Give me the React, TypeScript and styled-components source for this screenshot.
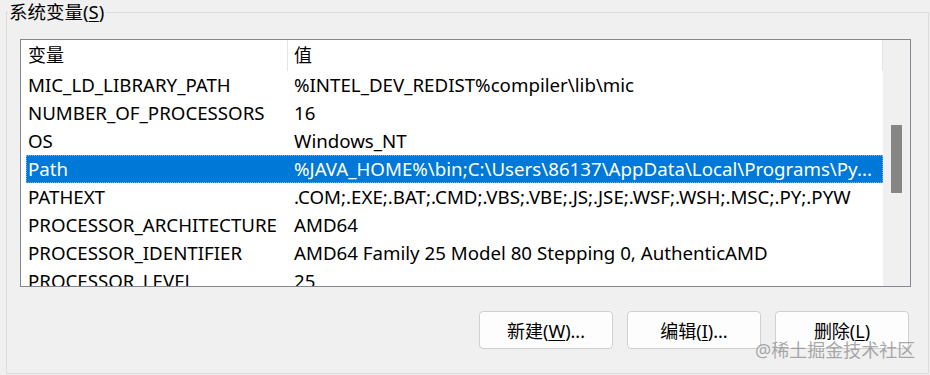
import React from 'react';
import styled, { createGlobalStyle } from 'styled-components';

const GlobalStyle = createGlobalStyle`
  html, body {
    margin: 0;
    padding: 0;
    height: 375px;
    overflow: hidden;
    background: #f0f0f0;
  }
  body {
    font-family: "Noto Sans", "Noto Sans CJK SC", sans-serif;
    color: #000;
  }
`;

type EnvVar = { name: string; value: string; selected?: boolean };

const variables: EnvVar[] = [
  { name: 'MIC_LD_LIBRARY_PATH', value: '%INTEL_DEV_REDIST%compiler\\lib\\mic' },
  { name: 'NUMBER_OF_PROCESSORS', value: '16' },
  { name: 'OS', value: 'Windows_NT' },
  {
    name: 'Path',
    value: '%JAVA_HOME%\\bin;C:\\Users\\86137\\AppData\\Local\\Programs\\Py...',
    selected: true,
  },
  { name: 'PATHEXT', value: '.COM;.EXE;.BAT;.CMD;.VBS;.VBE;.JS;.JSE;.WSF;.WSH;.MSC;.PY;.PYW' },
  { name: 'PROCESSOR_ARCHITECTURE', value: 'AMD64' },
  { name: 'PROCESSOR_IDENTIFIER', value: 'AMD64 Family 25 Model 80 Stepping 0, AuthenticAMD' },
  { name: 'PROCESSOR_LEVEL', value: '25' },
];

const App = () => {
  return (
    <Page>
      <GlobalStyle />
      <GroupBox>
        <Legend>
          系统变量(<u>S</u>)
        </Legend>
        <ListBox>
          <ListMain>
            <HeaderRow>
              <HeaderCell $width={267}>变量</HeaderCell>
              <HeaderCell>值</HeaderCell>
            </HeaderRow>
            {variables.map((v) => (
              <Row key={v.name} $selected={!!v.selected}>
                <NameCell>{v.name}</NameCell>
                <ValueCell>{v.value}</ValueCell>
              </Row>
            ))}
          </ListMain>
          <ScrollTrack>
            <ScrollThumb />
          </ScrollTrack>
        </ListBox>
        <ButtonBar>
          <Button>
            新建(<u>W</u>)...
          </Button>
          <Button>
            编辑(<u>I</u>)...
          </Button>
          <Button>
            删除(<u>L</u>)
          </Button>
        </ButtonBar>
      </GroupBox>
      <Watermark>@稀土掘金技术社区</Watermark>
    </Page>
  );
};

export default App;

const Page = styled.div`
  position: relative;
  width: 930px;
  height: 375px;
`;

const GroupBox = styled.fieldset`
  margin: 0 1px 0 6px;
  padding: 15px 17px 24px 13px;
  border: 1px solid #dcdcdc;
  min-width: 0;
`;

const Legend = styled.legend`
  margin-left: -12px;
  padding: 0 2px 0 1px;
  font-size: 18.5px;
  line-height: 24px;

  u {
    text-underline-offset: 2px;
  }
`;

const ListBox = styled.div`
  display: flex;
  height: 248px;
  box-sizing: border-box;
  border: 1px solid #828790;
  background: #fff;
  overflow: hidden;
`;

const ListMain = styled.div`
  flex: 1;
  min-width: 0;
  overflow: hidden;
`;

const HeaderRow = styled.div`
  display: flex;
  height: 31px;
`;

const HeaderCell = styled.div<{ $width?: number }>`
  flex: ${(p) => (p.$width ? 'none' : '1')};
  width: ${(p) => (p.$width ? `${p.$width}px` : 'auto')};
  box-sizing: border-box;
  padding-left: ${(p) => (p.$width ? '7px' : '6px')};
  border-right: 1px solid #e5e5e5;
  font-size: 18px;
  line-height: 31px;
`;

const Row = styled.div<{ $selected: boolean }>`
  display: flex;
  height: 28px;
  margin-left: 5px;
  font-size: 18.7px;
  line-height: 28px;
  white-space: nowrap;
  background: ${(p) => (p.$selected ? '#0078d7' : 'transparent')};
  color: ${(p) => (p.$selected ? '#fff' : '#000')};
  outline: ${(p) => (p.$selected ? '1px dotted #7fb6e6' : 'none')};
  outline-offset: -1px;
`;

const NameCell = styled.div`
  flex: none;
  width: 261px;
  box-sizing: border-box;
  padding-left: 2px;
  overflow: hidden;
`;

const ValueCell = styled.div`
  flex: 1;
  min-width: 0;
  padding-left: 7px;
  overflow: hidden;
`;

const ScrollTrack = styled.div`
  flex: none;
  width: 27px;
  padding-top: 85px;
  background: #f0f0f0;
`;

const ScrollThumb = styled.div`
  width: 11px;
  height: 68px;
  margin: 0 auto;
  background: #868686;
`;

const ButtonBar = styled.div`
  display: flex;
  justify-content: flex-end;
  gap: 14px;
  margin-top: 24px;
  padding-right: 2px;
`;

const Button = styled.button`
  width: 134px;
  height: 38px;
  box-sizing: border-box;
  padding: 0;
  border: 1px solid #d0d0d0;
  border-radius: 4px;
  background: #fdfdfd;
  color: #000;
  font-family: "Noto Sans", "Noto Sans CJK SC", sans-serif;
  font-size: 18px;

  u {
    text-underline-offset: 2px;
  }
`;

const Watermark = styled.div`
  position: absolute;
  left: 755px;
  top: 338px;
  font-size: 18px;
  line-height: 24px;
  color: rgba(140, 140, 140, 0.75);
  pointer-events: none;
`;
